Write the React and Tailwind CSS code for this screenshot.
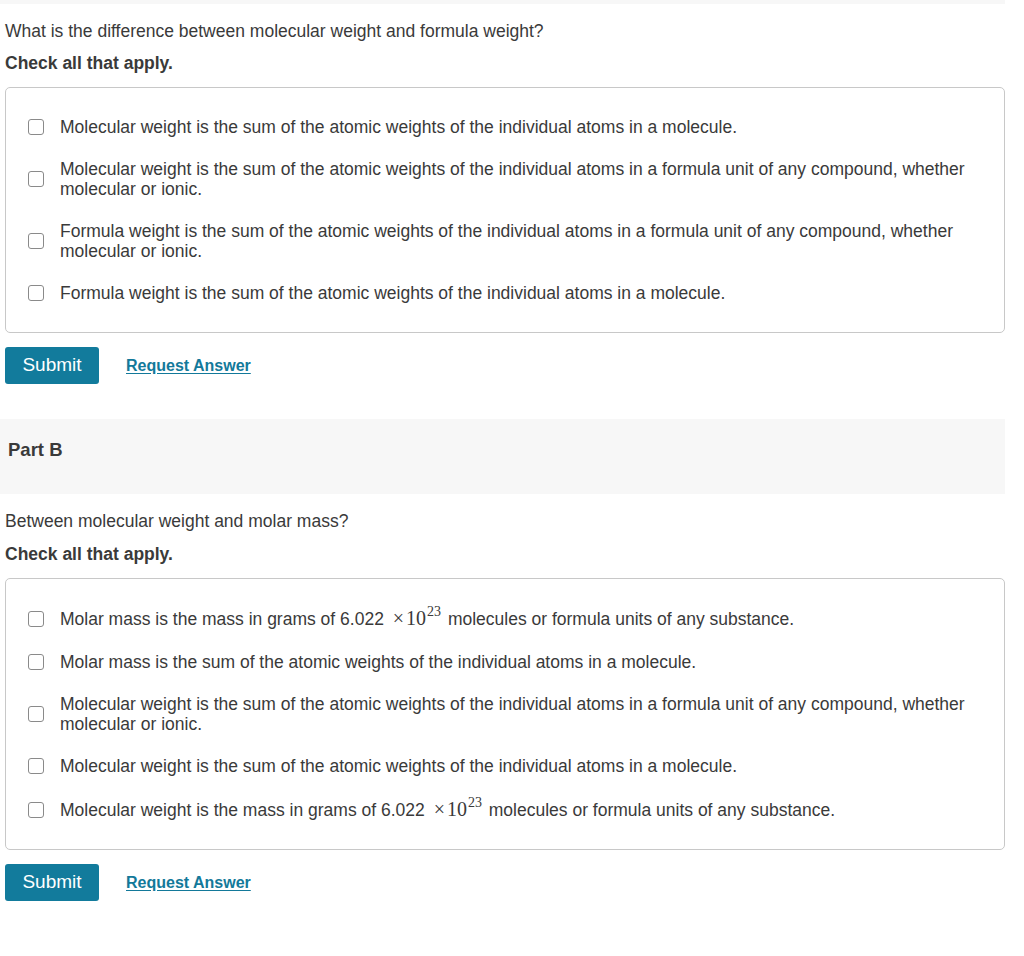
import React from "react";

const partA = [
  "Molecular weight is the sum of the atomic weights of the individual atoms in a molecule.",
  "Molecular weight is the sum of the atomic weights of the individual atoms in a formula unit of any compound, whether molecular or ionic.",
  "Formula weight is the sum of the atomic weights of the individual atoms in a formula unit of any compound, whether molecular or ionic.",
  "Formula weight is the sum of the atomic weights of the individual atoms in a molecule.",
];

// MathJax style "×10^23"
const Avogadro = () => (
  <span className="font-['Liberation_Serif',serif] text-[20px] ml-[4px] mr-[2px] leading-none">
    <span className="mr-[2px]">×</span>10
    <span className="text-[14px] relative top-[-9px] ml-[1px]">23</span>
  </span>
);

const partB = [
  {
    text: (
      <>
        Molar mass is the mass in grams of 6.022 <Avogadro /> molecules or formula units of any
        substance.
      </>
    ),
    tall: true,
  },
  { text: "Molar mass is the sum of the atomic weights of the individual atoms in a molecule." },
  {
    text: "Molecular weight is the sum of the atomic weights of the individual atoms in a formula unit of any compound, whether molecular or ionic.",
  },
  { text: "Molecular weight is the sum of the atomic weights of the individual atoms in a molecule." },
  {
    text: (
      <>
        Molecular weight is the mass in grams of 6.022 <Avogadro /> molecules or formula units of
        any substance.
      </>
    ),
    tall: true,
  },
];

const Option = ({ children, tall }) => (
  <label className={`flex items-center pl-[22px] pr-8 ${tall ? "py-[12px]" : "py-[11px]"}`}>
    <span className="w-[16px] h-[16px] shrink-0 rounded-[3px] border border-[#8a8a8a] bg-white" />
    <span className="ml-[16px] leading-5">{children}</span>
  </label>
);

const Actions = () => (
  <div className="flex items-center mt-[14px]">
    <button className="w-[94px] h-[37px] rounded-[3px] bg-[#127b9c] text-white text-[19px]">
      Submit
    </button>
    <a href="#" className="ml-[27px] text-[16px] font-bold text-[#13799a] underline underline-offset-2">
      Request Answer
    </a>
  </div>
);

export default function App() {
  return (
    <div className="w-[1005px] bg-white text-[#3a3a3a] text-[17.5px] font-['Liberation_Sans',Arial,sans-serif]">
      <div className="h-[4px] bg-[#f7f7f7]" />

      <div className="pl-[5px]">
        <p className="mt-[17px] leading-5">What is the difference between molecular weight and formula weight?</p>
        <p className="mt-[12px] leading-5 font-bold">Check all that apply.</p>
        <div className="mt-[14px] border border-[#c8c8c8] rounded-[5px] py-[18px]">
          {partA.map((t, i) => (
            <Option key={i}>{t}</Option>
          ))}
        </div>
        <Actions />
      </div>

      <div className="mt-[35px] h-[75px] bg-[#f7f7f7] pl-[8px] pt-[21px]">
        <h2 className="font-bold text-[18.5px] leading-5">Part B</h2>
      </div>

      <div className="pl-[5px]">
        <p className="mt-[17px] leading-5">Between molecular weight and molar mass?</p>
        <p className="mt-[13px] leading-5 font-bold">Check all that apply.</p>
        <div className="mt-[14px] border border-[#c8c8c8] rounded-[5px] py-[17px]">
          {partB.map((o, i) => (
            <Option key={i} tall={o.tall}>
              {o.text}
            </Option>
          ))}
        </div>
        <Actions />
      </div>
    </div>
  );
}
